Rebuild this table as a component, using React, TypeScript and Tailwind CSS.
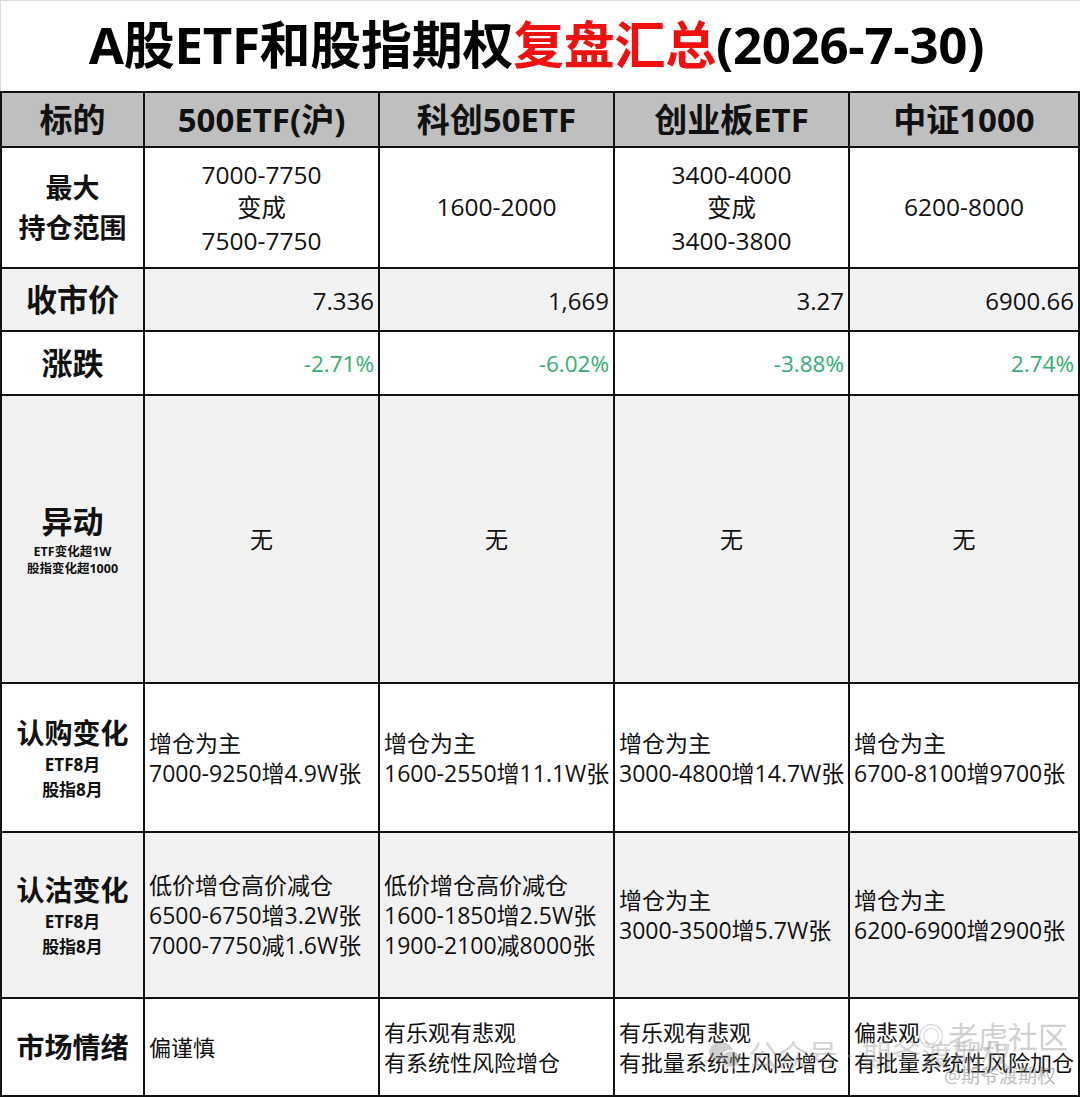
import React from "react";

const FONT = { fontFamily: '"Open Sans", "Noto Sans CJK SC", sans-serif' };

const cols = ["500ETF(沪)", "科创50ETF", "创业板ETF", "中证1000"];

function Label({ children, bg }: { children: React.ReactNode; bg: string }) {
  return (
    <div className={`${bg} flex flex-col items-center justify-center text-center font-bold text-[#111]`}>
      {children}
    </div>
  );
}

function Cell({ children, bg, cls = "" }: { children: React.ReactNode; bg: string; cls?: string }) {
  return <div className={`${bg} flex text-[#111] ${cls}`}>{children}</div>;
}

export default function App() {
  const G = "bg-[#f2f2f2]";
  const W = "bg-white";
  const body = "flex-col justify-center pl-[4px] text-[23px] leading-[30px] whitespace-nowrap";
  return (
    <div className="w-[1080px] h-[1097px] bg-white relative overflow-hidden" style={FONT}>
      <div className="h-[91px] flex items-center justify-center border-t border-l border-[#dcdcdc]">
        <h1 className="text-[51px] font-bold leading-none tracking-[-0.3px] text-black pr-[8px] pb-[4px]">
          A股ETF和股指期权<span className="text-[#f01010]">复盘汇总</span>(2026-7-30)
        </h1>
      </div>
      <div
        className="grid bg-[#111] p-[2px] gap-[2px] w-[1080px]"
        style={{
          gridTemplateColumns: "141px 233px 233px 233px 228px",
          gridTemplateRows: "53px 119px 61px 62px 286px 147px 164px 96px",
        }}
      >
        {/* header */}
        <Label bg="bg-[#bfbfbf]">
          <span className="text-[33px] leading-none">标的</span>
        </Label>
        {cols.map((c) => (
          <div key={c} className="bg-[#bfbfbf] flex items-center justify-center text-[33px] font-bold text-[#111] leading-none">
            {c}
          </div>
        ))}

        {/* 最大持仓范围 */}
        <Label bg={W}>
          <span className="text-[27px] leading-[40px]">最大</span>
          <span className="text-[27px] leading-[40px]">持仓范围</span>
        </Label>
        <Cell bg={W} cls="flex-col items-center justify-center text-[24.5px] leading-[33px]">
          <span>7000-7750</span>
          <span>变成</span>
          <span>7500-7750</span>
        </Cell>
        <Cell bg={W} cls="items-center justify-center text-[24.5px]">1600-2000</Cell>
        <Cell bg={W} cls="flex-col items-center justify-center text-[24.5px] leading-[33px]">
          <span>3400-4000</span>
          <span>变成</span>
          <span>3400-3800</span>
        </Cell>
        <Cell bg={W} cls="items-center justify-center text-[24.5px]">6200-8000</Cell>

        {/* 收市价 */}
        <Label bg={G}>
          <span className="text-[31px] leading-none">收市价</span>
        </Label>
        {["7.336", "1,669", "3.27", "6900.66"].map((v) => (
          <Cell key={v} bg={G} cls="items-center justify-end pr-[4px] text-[24px] pt-[2px]">
            {v}
          </Cell>
        ))}

        {/* 涨跌 */}
        <Label bg={W}>
          <span className="text-[31px] leading-none">涨跌</span>
        </Label>
        {["-2.71%", "-6.02%", "-3.88%", "2.74%"].map((v) => (
          <Cell key={v} bg={W} cls="items-center justify-end pr-[4px] text-[22.5px] pt-[2px]">
            <span className="text-[#35ad72]">{v}</span>
          </Cell>
        ))}

        {/* 异动 */}
        <Label bg={G}>
          <span className="text-[31px] leading-[40px]">异动</span>
          <span className="text-[12.5px] leading-[17px] mt-[2px]">ETF变化超1W</span>
          <span className="text-[12.5px] leading-[17px]">股指变化超1000</span>
        </Label>
        {[0, 1, 2, 3].map((i) => (
          <Cell key={i} bg={G} cls="items-center justify-center text-[23px]">
            无
          </Cell>
        ))}

        {/* 认购变化 */}
        <Label bg={W}>
          <span className="text-[28px] leading-[38px]">认购变化</span>
          <span className="text-[17px] leading-[25px]">ETF8月</span>
          <span className="text-[17px] leading-[25px]">股指8月</span>
        </Label>
        {[
          "7000-9250增4.9W张",
          "1600-2550增11.1W张",
          "3000-4800增14.7W张",
          "6700-8100增9700张",
        ].map((v) => (
          <Cell key={v} bg={W} cls={body}>
            <span>增仓为主</span>
            <span>{v}</span>
          </Cell>
        ))}

        {/* 认沽变化 */}
        <Label bg={G}>
          <span className="text-[28px] leading-[38px]">认沽变化</span>
          <span className="text-[17px] leading-[25px]">ETF8月</span>
          <span className="text-[17px] leading-[25px]">股指8月</span>
        </Label>
        <Cell bg={G} cls={body}>
          <span>低价增仓高价减仓</span>
          <span>6500-6750增3.2W张</span>
          <span>7000-7750减1.6W张</span>
        </Cell>
        <Cell bg={G} cls={body}>
          <span>低价增仓高价减仓</span>
          <span>1600-1850增2.5W张</span>
          <span>1900-2100减8000张</span>
        </Cell>
        <Cell bg={G} cls={body}>
          <span>增仓为主</span>
          <span>3000-3500增5.7W张</span>
        </Cell>
        <Cell bg={G} cls={body}>
          <span>增仓为主</span>
          <span>6200-6900增2900张</span>
        </Cell>

        {/* 市场情绪 */}
        <Label bg={W}>
          <span className="text-[28px] leading-none">市场情绪</span>
        </Label>
        <Cell bg={W} cls="items-center pl-[4px] text-[22px]">偏谨慎</Cell>
        <Cell bg={W} cls="flex-col justify-center pl-[4px] text-[22px] leading-[30px] whitespace-nowrap">
          <span>有乐观有悲观</span>
          <span>有系统性风险增仓</span>
        </Cell>
        <Cell bg={W} cls="flex-col justify-center pl-[4px] text-[22px] leading-[30px] whitespace-nowrap">
          <span>有乐观有悲观</span>
          <span>有批量系统性风险增仓</span>
        </Cell>
        <Cell bg={W} cls="flex-col justify-center pl-[4px] text-[22px] leading-[30px] whitespace-nowrap">
          <span>偏悲观</span>
          <span>有批量系统性风险加仓</span>
        </Cell>
      </div>

      {/* watermark */}
      <div className="absolute left-[708px] top-[1032px] flex items-center gap-[6px] text-[30px] text-[#9a9a9a] opacity-40 pointer-events-none whitespace-nowrap">
        <svg width="34" height="30" viewBox="0 0 34 30">
          <ellipse cx="13" cy="12" rx="12" ry="10" fill="#8a8a8a" />
          <ellipse cx="23" cy="19" rx="10" ry="8.5" fill="#8a8a8a" stroke="#fff" strokeWidth="1.5" />
        </svg>
        <span>公众号 · 期爷渡期权</span>
      </div>
      <div className="absolute left-[918px] top-[1014px] flex items-center text-[30px] text-[#9a9a9a] opacity-45 pointer-events-none whitespace-nowrap">
        <span className="text-[26px] mr-[4px]">◎</span>
        <span>老虎社区</span>
      </div>
      <div className="absolute left-[944px] top-[1062px] text-[19px] text-[#8a8a8a] opacity-55 pointer-events-none whitespace-nowrap">
        @期爷渡期权
      </div>
    </div>
  );
}
